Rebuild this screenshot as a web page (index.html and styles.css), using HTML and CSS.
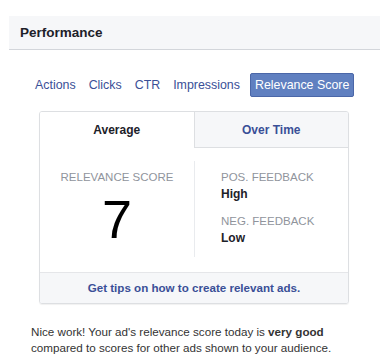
FILE: index.html
```html
<!DOCTYPE html>
<html>
<head>
<meta name="viewport" content="width=device-width, initial-scale=1.0">
<link rel="stylesheet" href="styles.css">
</head>
<body>

<!-- CABECERA DEL PANEL -->
<div class="panel-header">Performance</div>

<!-- PESTAÑAS DE METRICAS -->
<div class="metric-tabs">
  <a class="metric">Actions</a>
  <a class="metric">Clicks</a>
  <a class="metric">CTR</a>
  <a class="metric">Impressions</a>
  <a class="metric active">Relevance Score</a>
</div>

<!-- TARJETA DE RELEVANCIA -->
<div class="score-card">
  <div class="card-tabs">
    <div class="card-tab selected">Average</div>
    <div class="card-tab">Over Time</div>
  </div>
  <div class="card-body">
    <div class="score-col">
      <div class="label">RELEVANCE SCORE</div>
      <div class="score">7</div>
    </div>
    <div class="feedback-col">
      <div class="label">POS. FEEDBACK</div>
      <div class="value">High</div>
      <div class="label neg">NEG. FEEDBACK</div>
      <div class="value">Low</div>
    </div>
  </div>
  <div class="card-footer"><a>Get tips on how to create relevant ads.</a></div>
</div>

<p class="summary">Nice work! Your ad's relevance score today is <b>very good</b> compared to scores for other ads shown to your audience.</p>

</body>
</html>
```

FILE: styles.css
```css
* {
  box-sizing: border-box;
}

body {
  margin: 0;
  background: #fff;
  font-family: "Liberation Sans", Arial, sans-serif;
  color: #1d2129;
}

.panel-header {
  margin: 16px 0 0 9px;
  height: 34px;
  padding-left: 11px;
  line-height: 33px;
  font-size: 13.5px;
  font-weight: bold;
  background: #f6f7f9;
  border-bottom: 1px solid #d3d6db;
}

/*Pestañas de metricas*/
.metric-tabs {
  display: flex;
  align-items: center;
  gap: 13px;
  margin-top: 23px;
  padding-left: 35px;
}

.metric {
  font-size: 12.4px;
  line-height: 24px;
  color: #3a4f97;
}

.metric.active {
  margin-left: -3px;
  padding: 0 4px;
  color: #fff;
  background: #6080c0;
  border: 1px solid #4b67a8;
  border-radius: 2px;
  line-height: 22px;
}

/*Tarjeta*/
.score-card {
  width: 310px;
  margin: 14px 0 0 39px;
  border: 1px solid #dddfe2;
  border-radius: 3px;
  box-shadow: 0 1px 1px rgba(0, 0, 0, 0.06);
  overflow: hidden;
}

.card-tabs {
  display: flex;
}

.card-tab {
  flex: 1;
  height: 36px;
  line-height: 36px;
  text-align: center;
  font-size: 12px;
  font-weight: bold;
  color: #3a4f97;
  background: #f6f7f9;
  border-left: 1px solid #dddfe2;
  border-bottom: 1px solid #dddfe2;
}

.card-tab.selected {
  color: #1d2129;
  background: #fff;
  border: none;
}

.card-body {
  display: flex;
  padding: 13px 0 15px;
}

.score-col {
  width: 154px;
  padding-top: 9px;
  text-align: center;
}

.feedback-col {
  flex: 1;
  height: 96px;
  padding: 9px 0 0 26px;
  border-left: 1px solid #e9ebee;
}

.label {
  font-size: 11.5px;
  line-height: 14px;
  color: #90949c;
}

.label.neg {
  margin-top: 12px;
}

.value {
  margin-top: 2px;
  font-size: 12px;
  font-weight: bold;
  line-height: 16px;
}

.score {
  margin-top: 8px;
  font-size: 54px;
  line-height: 54px;
  color: #000;
}

.card-footer {
  height: 31px;
  line-height: 30px;
  text-align: center;
  font-size: 11.6px;
  font-weight: bold;
  color: #3a4f97;
  background: #f6f7f9;
  border-top: 1px solid #e5e6e9;
}

.summary {
  margin: 20px 0 0 31px;
  width: 320px;
  font-size: 11.65px;
  line-height: 16px;
  color: #333;
}
```
